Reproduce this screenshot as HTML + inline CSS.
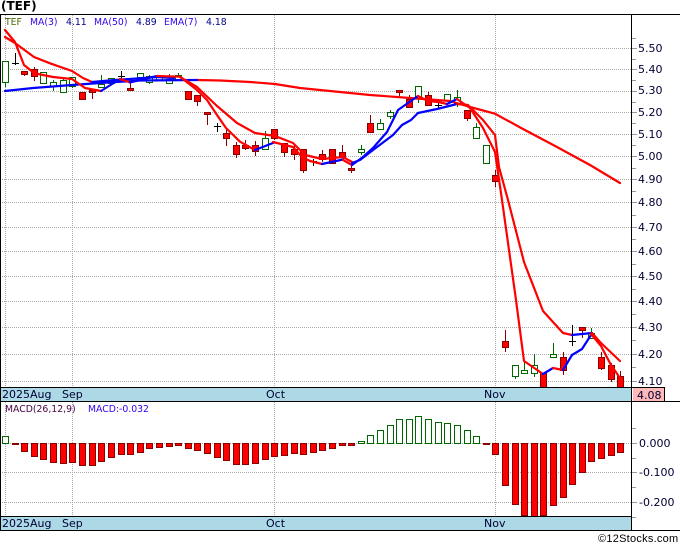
<!DOCTYPE html>
<html>
<head>
<meta charset="utf-8">
<style>
html,body{margin:0;padding:0;background:#fff;width:680px;height:546px;overflow:hidden}
svg{display:block}
text{font-family:"DejaVu Sans","Liberation Sans",sans-serif;fill:#000033}
.s{font-size:11px}
.t{font-size:9.3px}
</style>
</head>
<body>
<svg width="680" height="546" viewBox="0 0 680 546" xmlns="http://www.w3.org/2000/svg">
<!-- grid -->
<g stroke="#aaa" stroke-width="1" stroke-dasharray="1 1" shape-rendering="crispEdges" fill="none">
<path d="M0 48.5H632M0 69.5H632M0 91.5H632M0 112.5H632M0 134.5H632M0 156.5H632M0 179.5H632M0 202.5H632M0 227.5H632M0 251.5H632M0 276.5H632M0 301.5H632M0 327.5H632M0 354.5H632M0 381.5H632"/>
<path d="M0 443.5H632M0 472.5H632M0 502.5H632"/>
<path d="M5.5 15V387M72.5 15V387M274.5 15V387M495.5 15V387M5.5 402V516M72.5 402V516M274.5 402V516M495.5 402V516"/>
</g>
<!-- ticks -->
<g stroke="#999" stroke-width="1" shape-rendering="crispEdges" fill="none">
<path d="M632 38.5h4M632 48.5h5M632 59.5h4M632 69.5h5M632 80.5h4M632 91.5h5M632 102.5h4M632 112.5h5M632 123.5h4M632 134.5h5M632 145.5h4M632 156.5h5M632 168.5h4M632 179.5h5M632 191.5h4M632 202.5h5M632 215.5h4M632 227.5h5M632 239.5h4M632 251.5h5M632 264.5h4M632 276.5h5M632 289.5h4M632 301.5h5M632 314.5h4M632 327.5h5M632 340.5h4M632 354.5h5M632 367.5h4M632 381.5h5"/>
<path d="M632 428.5h4M632 443.5h5M632 458.5h4M632 472.5h5M632 487.5h4M632 502.5h5M632 517.5h4"/>
</g>
<!-- wicks -->
<g fill="none" stroke-width="1" shape-rendering="crispEdges">
<path stroke="#006600" d="M5.5 61V87M43.5 72V84M53.5 80V91M63.5 77V92M72.5 77V88M101.5 75V87M111.5 78V84M140.5 73V78M149.5 75V84M159.5 75V81M169.5 74V83M178.5 73V81M265.5 131V149M361.5 145V155M380.5 119V129M390.5 110V119M418.5 86V103M447.5 94V100M457.5 90V107M476.5 123V138M486.5 145V163M515.5 365V379M524.5 362V373M534.5 354V377M553.5 343V357M591.5 328V338"/>
<path stroke="#880000" d="M24.5 71V76M34.5 67V81M82.5 92V99M92.5 90V99M130.5 83V90M188.5 91V99M197.5 95V106M207.5 112V125M226.5 128V146M236.5 142V158M245.5 140V150M255.5 141V156M274.5 129V140M284.5 143V157M294.5 145V160M303.5 149V173M322.5 150V162M332.5 149V163M342.5 145V158M351.5 163V173M370.5 115V132M399.5 90V97M409.5 95V107M428.5 92V105M467.5 110V121M495.5 170V187M505.5 330V352M543.5 373V387M563.5 352V375M582.5 327V338M601.5 352V370M611.5 363V382M620.5 371V387"/>
<path stroke="#000" d="M15.5 53V65M12 63.5h7M121.5 71V79M118 76.5h7M217.5 123V132M214 126.5h7M313.5 159V166M310 161.5h7M438.5 101V108M435 105.5h7M572.5 325V346M569 341.5h7"/>
</g>
<!-- green bodies -->
<g fill="#fff" stroke="#006600" stroke-width="1" shape-rendering="crispEdges">
<rect x="2.5" y="61.5" width="6" height="21"/><rect x="40.5" y="72.5" width="6" height="11"/><rect x="50.5" y="82.5" width="6" height="4"/><rect x="60.5" y="80.5" width="6" height="12"/><rect x="69.5" y="77.5" width="6" height="9"/><rect x="98.5" y="84.5" width="6" height="3"/><rect x="108.5" y="78.5" width="6" height="5"/><rect x="137.5" y="73.5" width="6" height="4"/><rect x="146.5" y="76.5" width="6" height="6"/><rect x="156.5" y="76.5" width="6" height="4"/><rect x="166.5" y="79.5" width="6" height="4"/><rect x="175.5" y="75.5" width="6" height="5"/>
<rect x="262.5" y="138.5" width="6" height="11"/><rect x="358.5" y="149.5" width="6" height="3"/><rect x="377.5" y="123.5" width="6" height="6"/><rect x="387.5" y="112.5" width="6" height="4"/><rect x="415.5" y="86.5" width="6" height="12"/><rect x="444.5" y="94.5" width="6" height="6"/><rect x="454.5" y="97.5" width="6" height="6"/><rect x="473.5" y="127.5" width="6" height="11"/><rect x="483.5" y="145.5" width="6" height="18"/><rect x="512.5" y="365.5" width="6" height="11"/><rect x="521.5" y="370.5" width="6" height="3"/><rect x="531.5" y="365.5" width="6" height="8"/><rect x="550.5" y="354.5" width="6" height="3"/><rect x="588.5" y="333.5" width="6" height="5"/>
</g>
<!-- red bodies -->
<g fill="#ff0000" stroke="#880000" stroke-width="1" shape-rendering="crispEdges">
<rect x="21.5" y="71.5" width="6" height="3"/><rect x="31.5" y="69.5" width="6" height="7"/><rect x="79.5" y="92.5" width="6" height="7"/><rect x="89.5" y="90.5" width="6" height="2"/><rect x="127.5" y="88.5" width="6" height="2"/><rect x="185.5" y="91.5" width="6" height="8"/><rect x="194.5" y="95.5" width="6" height="6"/><rect x="204.5" y="112.5" width="6" height="2"/><rect x="223.5" y="133.5" width="6" height="5"/><rect x="233.5" y="145.5" width="6" height="9"/><rect x="242.5" y="145.5" width="6" height="3"/><rect x="252.5" y="145.5" width="6" height="6"/><rect x="271.5" y="129.5" width="6" height="9"/><rect x="281.5" y="143.5" width="6" height="9"/><rect x="291.5" y="149.5" width="6" height="5"/><rect x="300.5" y="149.5" width="6" height="21"/><rect x="319.5" y="154.5" width="6" height="5"/><rect x="329.5" y="149.5" width="6" height="14"/><rect x="339.5" y="152.5" width="6" height="5"/><rect x="348.5" y="168.5" width="6" height="2"/><rect x="367.5" y="123.5" width="6" height="9"/><rect x="396.5" y="90.5" width="6" height="2"/><rect x="406.5" y="99.5" width="6" height="8"/><rect x="425.5" y="95.5" width="6" height="10"/><rect x="464.5" y="110.5" width="6" height="8"/><rect x="492.5" y="175.5" width="6" height="6"/><rect x="502.5" y="341.5" width="6" height="6"/><rect x="540.5" y="373.5" width="6" height="14"/><rect x="560.5" y="357.5" width="6" height="13"/><rect x="579.5" y="327.5" width="6" height="3"/><rect x="598.5" y="357.5" width="6" height="11"/><rect x="608.5" y="365.5" width="6" height="14"/><rect x="617.5" y="376.5" width="6" height="11"/>
</g>
<!-- lines -->
<g fill="none" stroke-width="2.2" stroke-linejoin="round" stroke-linecap="round">
<path stroke="#ff0000" d="M197 80L220 80.5L250 82L275 84L300 88L330 91L370 95L410 98L450 101L470 107L495 113.7L523 129L557 147L590 165L620 183"/>
<path stroke="#0000ff" d="M5 91L33 88L72 85L100 83L140 80.5L197 80"/>
<path stroke="#ff0000" d="M5 37L15 43L34 57L50 63.3L72 71L83 78L92 82"/>
<path stroke="#ff0000" d="M5 30L15 42L24 65L34 73L43 75L53 77L72 79L85 88L101 91"/>
<path stroke="#0000ff" d="M92 82L115 80L130 79L157 77L174 78"/>
<path stroke="#0000ff" d="M101 91L120 79"/>
<path stroke="#ff0000" d="M120 79L130 82.4"/>
<path stroke="#0000ff" d="M130 82.4L157 76"/>
<path stroke="#ff0000" d="M157 76L180 76.7L197 90L207 100L217 115L226 128L240 141.7L255 150"/>
<path stroke="#ff0000" d="M180 77L197 87L217 106L237 123L255 133L275 136L293 143L305 155L322 159L343 157L352 162"/>
<path stroke="#0000ff" d="M255 150L273 143"/>
<path stroke="#ff0000" d="M273 142L293 147L302 157L310 161L322 164"/>
<path stroke="#0000ff" d="M322 164L343 159.5"/>
<path stroke="#ff0000" d="M343 160L352 165"/>
<path stroke="#0000ff" d="M352 165L363 157L373 148L387 132L398 110L418 96"/>
<path stroke="#0000ff" d="M352 163L360 160L373 150L393 135L402 125L411 120L418 113L437 109L457 104"/>
<path stroke="#ff0000" d="M418 96L428 101L438 102L447 104"/>
<path stroke="#0000ff" d="M447 104L457 99"/>
<path stroke="#ff0000" d="M457 99L470 108L483 128L495 152L502 200L516 300L524 361L543 374"/>
<path stroke="#ff0000" d="M457 104L468 105L483 120L495 135L499 167L508 200L524 262L543 311L563 333L572 335"/>
<path stroke="#0000ff" d="M543 374L553 368"/>
<path stroke="#ff0000" d="M553 368L563 370"/>
<path stroke="#0000ff" d="M563 370L572 355L582 349L591 335"/>
<path stroke="#0000ff" d="M572 335L592 333"/>
<path stroke="#ff0000" d="M591 334L601 346L611 365L620 378"/>
<path stroke="#ff0000" d="M592 333L601 343L620 361"/>
</g>
<!-- MACD bars -->
<g fill="#ff0000" stroke="#880000" stroke-width="1" shape-rendering="crispEdges">
<rect x="12.5" y="443.5" width="6" height="1"/><rect x="21.5" y="443.5" width="6" height="8"/><rect x="31.5" y="443.5" width="6" height="13"/><rect x="40.5" y="443.5" width="6" height="16"/><rect x="50.5" y="443.5" width="6" height="19"/><rect x="60.5" y="443.5" width="6" height="20"/><rect x="69.5" y="443.5" width="6" height="19"/><rect x="79.5" y="443.5" width="6" height="22"/><rect x="89.5" y="443.5" width="6" height="22"/><rect x="98.5" y="443.5" width="6" height="18"/><rect x="108.5" y="443.5" width="6" height="14"/><rect x="118.5" y="443.5" width="6" height="11"/><rect x="127.5" y="443.5" width="6" height="11"/><rect x="137.5" y="443.5" width="6" height="9"/><rect x="146.5" y="443.5" width="6" height="5"/><rect x="156.5" y="443.5" width="6" height="4"/><rect x="166.5" y="443.5" width="6" height="3"/><rect x="175.5" y="443.5" width="6" height="2"/><rect x="185.5" y="443.5" width="6" height="5"/><rect x="194.5" y="443.5" width="6" height="7"/><rect x="204.5" y="443.5" width="6" height="10"/><rect x="214.5" y="443.5" width="6" height="14"/><rect x="223.5" y="443.5" width="6" height="17"/><rect x="233.5" y="443.5" width="6" height="21"/><rect x="242.5" y="443.5" width="6" height="21"/><rect x="252.5" y="443.5" width="6" height="20"/><rect x="262.5" y="443.5" width="6" height="16"/><rect x="271.5" y="443.5" width="6" height="13"/><rect x="281.5" y="443.5" width="6" height="12"/><rect x="291.5" y="443.5" width="6" height="10"/><rect x="300.5" y="443.5" width="6" height="11"/><rect x="310.5" y="443.5" width="6" height="9"/><rect x="319.5" y="443.5" width="6" height="7"/><rect x="329.5" y="443.5" width="6" height="5"/><rect x="339.5" y="443.5" width="6" height="2"/><rect x="348.5" y="443.5" width="6" height="2"/><rect x="483.5" y="443.5" width="6" height="1"/><rect x="492.5" y="443.5" width="6" height="11"/><rect x="502.5" y="443.5" width="6" height="42"/><rect x="512.5" y="443.5" width="6" height="61"/><rect x="521.5" y="443.5" width="6" height="72"/><rect x="531.5" y="443.5" width="6" height="73"/><rect x="540.5" y="443.5" width="6" height="72"/><rect x="550.5" y="443.5" width="6" height="62"/><rect x="560.5" y="443.5" width="6" height="54"/><rect x="569.5" y="443.5" width="6" height="41"/><rect x="579.5" y="443.5" width="6" height="29"/><rect x="588.5" y="443.5" width="6" height="18"/><rect x="598.5" y="443.5" width="6" height="15"/><rect x="608.5" y="443.5" width="6" height="12"/><rect x="617.5" y="443.5" width="6" height="9"/>
</g>
<g fill="#fff" stroke="#006600" stroke-width="1" shape-rendering="crispEdges">
<rect x="2.5" y="436.5" width="6" height="7"/><rect x="358.5" y="441.5" width="6" height="2"/><rect x="367.5" y="435.5" width="6" height="8"/><rect x="377.5" y="430.5" width="6" height="13"/><rect x="387.5" y="425.5" width="6" height="18"/><rect x="396.5" y="419.5" width="6" height="24"/><rect x="406.5" y="419.5" width="6" height="24"/><rect x="415.5" y="416.5" width="6" height="27"/><rect x="425.5" y="419.5" width="6" height="24"/><rect x="435.5" y="422.5" width="6" height="21"/><rect x="444.5" y="423.5" width="6" height="20"/><rect x="454.5" y="425.5" width="6" height="18"/><rect x="464.5" y="430.5" width="6" height="13"/><rect x="473.5" y="436.5" width="6" height="7"/>
</g>
<!-- date bars -->
<g shape-rendering="crispEdges">
<rect x="1" y="388" width="631" height="13" fill="#add8e6"/>
<rect x="1" y="517" width="631" height="13" fill="#add8e6"/>
<rect x="633" y="388" width="31" height="13" fill="#ffb9b9"/>
<g fill="none" stroke="#000" stroke-width="1">
<path d="M0 14.5H680M0.5 14V530M631.5 14V530M0 387.5H664M0 401.5H680M0 516.5H632M0 530.5H680M664.5 387V401"/>
</g>
</g>
<!-- text -->
<text x="1" y="10" style="font-size:12px;font-weight:bold;fill:#000">(TEF)</text>
<text class="t" x="5" y="25" style="fill:#446600">TEF</text>
<text class="t" x="30" y="25" style="fill:#3300ee">MA(3)</text>
<text class="t" x="66" y="25" style="fill:#000088">4.11</text>
<text class="t" x="94" y="25" style="fill:#3300ee">MA(50)</text>
<text class="t" x="136" y="25" style="fill:#000088">4.89</text>
<text class="t" x="164" y="25" style="fill:#3300ee">EMA(7)</text>
<text class="t" x="206" y="25" style="fill:#000088">4.18</text>
<text class="t" x="5" y="412" style="fill:#440044">MACD(26,12,9)</text>
<text class="t" x="88" y="412" style="fill:#3300ee">MACD:-0.032</text>
<g class="s">
<text class="s" x="638" y="52">5.50</text><text class="s" x="638" y="73">5.40</text><text class="s" x="638" y="94">5.30</text><text class="s" x="638" y="116">5.20</text><text class="s" x="638" y="138">5.10</text><text class="s" x="638" y="160">5.00</text><text class="s" x="638" y="183">4.90</text><text class="s" x="638" y="206">4.80</text><text class="s" x="638" y="231">4.70</text><text class="s" x="638" y="255">4.60</text><text class="s" x="638" y="280">4.50</text><text class="s" x="638" y="305">4.40</text><text class="s" x="638" y="331">4.30</text><text class="s" x="638" y="358">4.20</text><text class="s" x="638" y="385">4.10</text>
<text class="s" x="637" y="399">4.08</text>
<text class="s" x="639" y="447">0.000</text><text class="s" x="639" y="476">-0.100</text><text class="s" x="639" y="506">-0.200</text>
<text class="s" x="2" y="398">2025Aug</text><text class="s" x="62" y="398">Sep</text><text class="s" x="266" y="398">Oct</text><text class="s" x="484" y="398">Nov</text>
<text class="s" x="2" y="527">2025Aug</text><text class="s" x="62" y="527">Sep</text><text class="s" x="266" y="527">Oct</text><text class="s" x="484" y="527">Nov</text>
<text x="598" y="542" style="font-family:'Liberation Sans',sans-serif;font-size:11px;letter-spacing:.25px;fill:#000">©12Stocks.com</text>
</g>
</svg>
</body>
</html>
